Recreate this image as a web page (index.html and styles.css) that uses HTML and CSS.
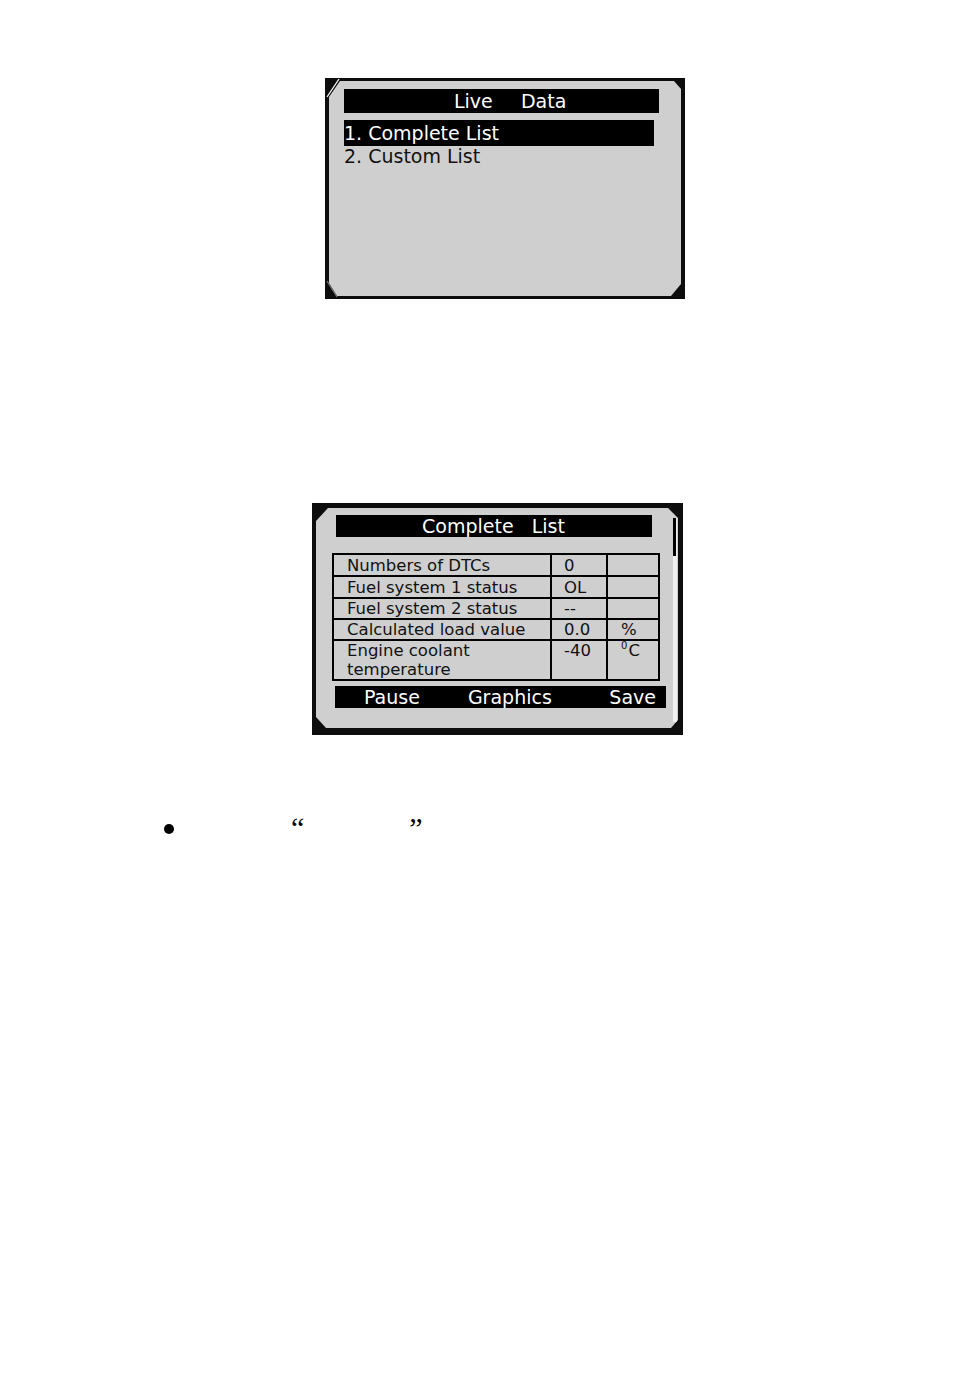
FILE: index.html
```html
<!DOCTYPE html>
<html>
<head>
<meta charset="utf-8">
<link rel="stylesheet" href="styles.css">
</head>
<body>
<div class="page">
  <div class="lcd lcd1">
    <div class="glass glass1">
      <div class="titlebar t1">Live    Data</div>
      <div class="item sel">1. Complete List</div>
      <div class="item">2. Custom List</div>
    </div>
    <svg class="glint" width="20" height="24" viewBox="0 0 20 24"><line x1="2" y1="19" x2="14" y2="1" stroke="#fff" stroke-width="1.3"/></svg>
    <svg class="glint-bl" width="16" height="20" viewBox="0 0 16 20"><line x1="2" y1="2" x2="12" y2="18" stroke="#777" stroke-width="1.2"/></svg>
  </div>

  <div class="lcd lcd2">
    <div class="glass glass2">
      <div class="col">
        <div class="titlebar t2">Complete   List</div>
        <div class="grid">
          <div class="c">Numbers of DTCs</div><div class="c v">0</div><div class="c u"></div>
          <div class="c">Fuel system 1 status</div><div class="c v">OL</div><div class="c u"></div>
          <div class="c">Fuel system 2 status</div><div class="c v">--</div><div class="c u"></div>
          <div class="c">Calculated load value</div><div class="c v">0.0</div><div class="c u">%</div>
          <div class="c top">Engine coolant<br>temperature</div><div class="c v top">-40</div><div class="c u top"><sup>0</sup>C</div>
        </div>
        <div class="softkeys"><span class="k1">Pause</span><span class="k2">Graphics</span><span class="k3">Save</span></div>
      </div>
      <div class="scroll"><div class="thumb"></div></div>
    </div>
  </div>

  <div class="note">
    <span class="dot"></span>
    <span class="q q1">“</span>
    <span class="q q2">”</span>
  </div>
</div>
</body>
</html>
```
FILE: styles.css
```css
html, body {
  margin: 0;
  padding: 0;
  background: #fff;
}
.page {
  width: 954px;
  height: 1374px;
  overflow: hidden;
  font-family: "DejaVu Sans", Verdana, sans-serif;
}
.lcd {
  position: relative;
  background: #0d0d0d;
  box-sizing: border-box;
}
.glass {
  background: #cfcfcf;
  box-sizing: border-box;
}

/* Screen 1 */
.lcd1 {
  margin: 78px 0 0 325px;
  width: 360px;
  height: 221px;
  padding: 3px 4px 3px 4px;
}
.glass1 {
  width: 352px;
  height: 215px;
  padding: 8px 0 0 15px;
  clip-path: polygon(11px 0, calc(100% - 7px) 0, 100% 8px, 100% calc(100% - 12px), calc(100% - 10px) 100%, 8px 100%, 0 calc(100% - 13px), 0 16px);
}
.titlebar {
  background: #000;
  color: #fff;
  white-space: pre;
  font-size: 19px;
  box-sizing: border-box;
}
.t1 {
  width: 315px;
  height: 24px;
  line-height: 25px;
  padding-left: 110px;
  word-spacing: 1px;
}
.item {
  font-size: 19px;
  color: #111;
  height: 21px;
  line-height: 21px;
  white-space: pre;
}
.item.sel {
  margin-top: 7px;
  width: 310px;
  height: 26px;
  line-height: 26px;
  background: #000;
  color: #fff;
}
.glint {
  position: absolute;
  left: 0;
  top: 0;
}
.glint-bl {
  position: absolute;
  left: 0;
  bottom: 0;
}

/* Screen 2 */
.lcd2 {
  margin: 204px 0 0 312px;
  width: 371px;
  height: 232px;
  padding: 5px 5px 7px 4px;
}
.glass2 {
  width: 362px;
  height: 220px;
  display: flex;
  clip-path: polygon(12px 0, calc(100% - 10px) 0, 100% 10px, 100% calc(100% - 8px), calc(100% - 7px) 100%, 10px 100%, 0 calc(100% - 11px), 0 13px);
}
.col {
  width: 350px;
  box-sizing: border-box;
  padding: 7px 0 0 16px;
  display: flex;
  flex-direction: column;
}
.t2 {
  margin-left: 4px;
  width: 316px;
  height: 22px;
  line-height: 22px;
  padding-left: 86px;
}
.grid {
  margin-top: 16px;
  width: 328px;
  display: grid;
  grid-template-columns: 216px 54px 50px;
  grid-template-rows: 20px 20px 19px 19px 38px;
  gap: 2px;
  padding: 2px;
  box-sizing: border-box;
  background: #000;
}
.c {
  background: #cfcfcf;
  font-size: 16.5px;
  color: #111;
  padding-left: 13px;
  display: flex;
  align-items: center;
  white-space: nowrap;
  line-height: 19px;
}
.c.v {
  padding-left: 12px;
}
.c.u {
  padding-left: 13px;
}
.c.top {
  display: block;
  padding-top: 0;
}
.c sup {
  font-size: 10px;
  vertical-align: 0;
  position: relative;
  top: -7px;
  margin-right: 1px;
}
.softkeys {
  margin-top: 5px;
  margin-left: 3px;
  width: 331px;
  height: 22px;
  line-height: 22px;
  background: #000;
  color: #fff;
  font-size: 19px;
  display: flex;
  white-space: nowrap;
}
.k1 { margin-left: 29px; }
.k2 { margin-left: 48px; }
.k3 { margin-left: auto; margin-right: 10px; }
.scroll {
  margin-left: 7px;
  margin-top: 10px;
  width: 4px;
  height: 204px;
  background: #efefef;
}
.thumb {
  width: 3px;
  height: 38px;
  background: #000;
}

/* Bullet line */
.note {
  margin: 81px 0 0 164px;
  height: 30px;
  display: flex;
  align-items: flex-start;
  font-family: "Liberation Serif", "Times New Roman", serif;
}
.dot {
  margin-top: 8px;
  width: 10px;
  height: 10px;
  border-radius: 50%;
  background: #000;
}
.q {
  font-size: 30px;
  line-height: 30px;
  margin-top: -3px;
  color: #000;
}
.q1 { margin-left: 117px; }
.q2 { margin-left: 105px; }
```
